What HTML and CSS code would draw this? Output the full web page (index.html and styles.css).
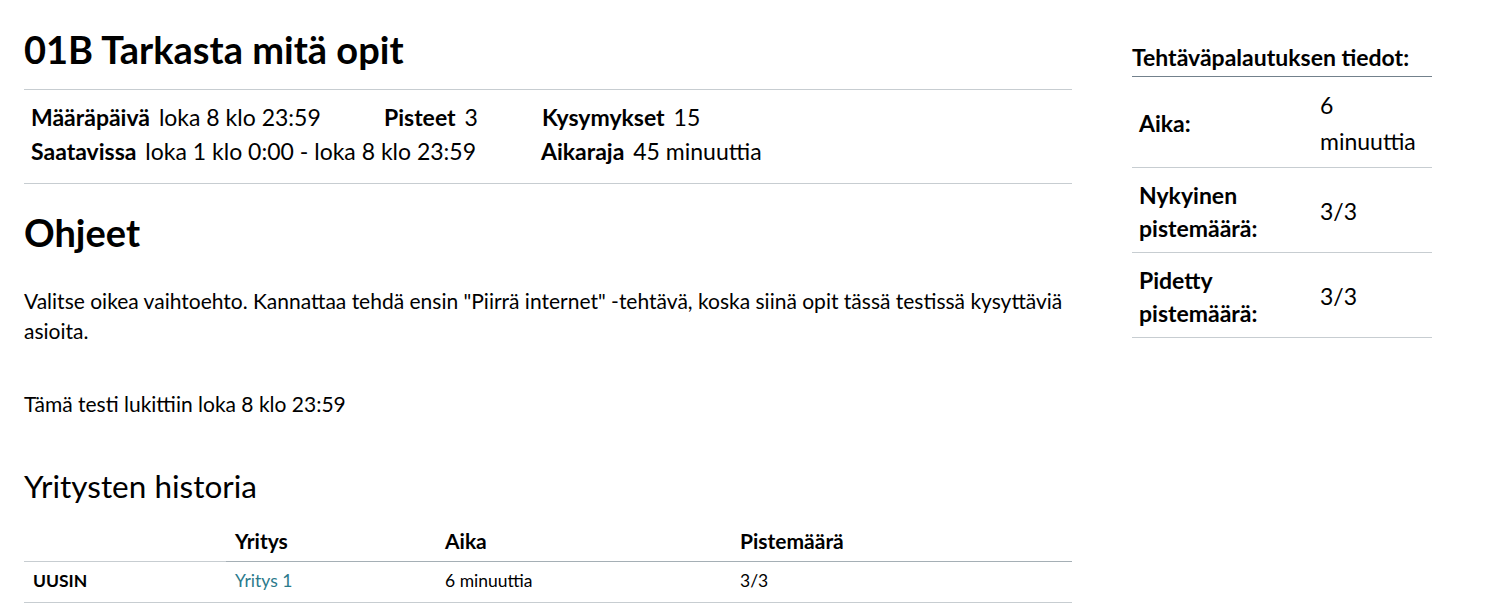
FILE: index.html
```html
<!DOCTYPE html>
<html lang="fi">
<head>
<meta charset="utf-8">
<title>01B Tarkasta mitä opit</title>
<link rel="stylesheet" href="styles.css">
</head>
<body>
<div class="page">
  <main class="main">
    <h1 class="title">01B Tarkasta mitä opit</h1>
    <div class="meta">
      <div class="meta-row">
        <div class="meta-item w1"><span class="k">Määräpäivä</span> loka 8 klo 23:59</div>
        <div class="meta-item w2"><span class="k">Pisteet</span> 3</div>
        <div class="meta-item"><span class="k">Kysymykset</span> 15</div>
      </div>
      <div class="meta-row">
        <div class="meta-item w12"><span class="k">Saatavissa</span> loka 1 klo 0:00 - loka 8 klo 23:59</div>
        <div class="meta-item"><span class="k">Aikaraja</span> 45 minuuttia</div>
      </div>
    </div>
    <h2 class="section">Ohjeet</h2>
    <p class="text">Valitse oikea vaihtoehto. Kannattaa tehdä ensin "Piirrä internet" -tehtävä, koska siinä opit tässä testissä kysyttäviä asioita.</p>
    <p class="text locked">Tämä testi lukittiin loka 8 klo 23:59</p>
    <h3 class="history">Yritysten historia</h3>
    <table class="hist">
      <thead>
        <tr><th class="c1"></th><th class="c2">Yritys</th><th class="c3">Aika</th><th class="c4">Pistemäärä</th></tr>
      </thead>
      <tbody>
        <tr><td class="latest">UUSIN</td><td><a class="link" href="#">Yritys 1</a></td><td>6 minuuttia</td><td>3/3</td></tr>
      </tbody>
    </table>
  </main>
  <aside class="side">
    <h4 class="side-title">Tehtäväpalautuksen tiedot:</h4>
    <table class="details">
      <tr><th>Aika:</th><td>6 minuuttia</td></tr>
      <tr><th>Nykyinen pistemäärä:</th><td>3/3</td></tr>
      <tr><th>Pidetty pistemäärä:</th><td>3/3</td></tr>
    </table>
  </aside>
</div>
</body>
</html>
```

FILE: styles.css
```css
* { box-sizing: border-box; }
html, body { margin: 0; padding: 0; background: #fff; }
body {
  font-family: Lato, "Noto Sans", sans-serif;
  color: #000;
}
.page {
  display: flex;
  gap: 60px;
  padding: 0 24px;
}
.main { width: 1048px; flex: none; }
.side { width: 300px; flex: none; padding-top: 42px; }

.title {
  font-size: 38px;
  font-weight: 700;
  margin: 0;
  padding-top: 26px;
  line-height: 46px;
  padding-bottom: 17px;
  border-bottom: 1px solid #c7cdd1;
}
.meta {
  padding: 10px 0 15px 7px;
  border-bottom: 1px solid #c7cdd1;
  font-size: 23px;
  line-height: 34px;
}
.meta-row { display: flex; }
.meta-item { white-space: nowrap; }
.w1 { width: 353px; }
.w2 { width: 158px; }
.w12 { width: 510px; }
.k { font-weight: 700; margin-right: 3px; }

.section {
  font-size: 38px;
  font-weight: 700;
  margin: 23px 0 0;
  line-height: 50px;
}
.text {
  font-size: 21px;
  line-height: 30px;
  margin: 29px 0 0;
}
.locked { margin-top: 43px; }
.history {
  font-size: 31.5px;
  font-weight: 400;
  margin: 47px 0 0;
  line-height: 40px;
}
.hist {
  width: 100%;
  border-collapse: collapse;
  margin-top: 15px;
}
.hist th {
  text-align: left;
  font-size: 21px;
  font-weight: 700;
  padding: 8px 9px 8px;
  line-height: 24px;
  border-bottom: 1px solid #a5afb5;
}
.hist th.c1 { border-bottom-color: #c7cdd1; }
.hist .c1 { width: 202px; }
.hist .c2 { width: 210px; }
.hist .c3 { width: 295px; }
.hist td {
  font-size: 17.5px;
  padding: 7px 9px 9px;
  line-height: 24px;
  border-bottom: 1px solid #c7cdd1;
}
.latest { font-weight: 700; }
.link { color: #2b7a8c; text-decoration: none; }

.side-title {
  font-size: 23px;
  font-weight: 700;
  margin: 0;
  line-height: 30px;
  padding-bottom: 4px;
  border-bottom: 1px solid #73818c;
}
.details {
  width: 100%;
  border-collapse: collapse;
  font-size: 23px;
}
.details th, .details td {
  text-align: left;
  padding: 11px 7px 8px;
  border-bottom: 1px solid #c7cdd1;
  vertical-align: middle;
}
.details th { font-weight: 700; width: 181px; line-height: 32.5px; }
.details td { font-weight: 400; line-height: 35.5px; }
```
